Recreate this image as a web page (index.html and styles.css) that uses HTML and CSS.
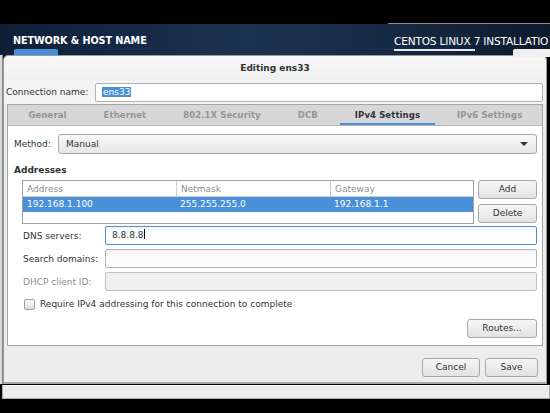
FILE: index.html
```html
<!DOCTYPE html>
<html>
<head>
<meta charset="utf-8">
<link rel="stylesheet" href="styles.css">
</head>
<body>
<div class="screen">
  <div class="topblack"></div>
  <div class="header">
    <div class="hleft">
      <div class="htitle">NETWORK &amp; HOST NAME</div>
      <div class="hbar"></div>
    </div>
    <div class="hright">
      <div class="hsub">CENTOS LINUX 7 INSTALLATIO</div>
      <div class="hline"></div>
    </div>
    <div class="hbox"></div>
  </div>
  <div class="main">
    <div class="lsliver"></div>
    <div class="dialog">
      <div class="dtitle">Editing ens33</div>
      <div class="connrow">
        <span class="lbl">Connection name:</span>
        <div class="input connin"><span class="sel">ens33</span></div>
      </div>
      <div class="notebook">
        <div class="tabs">
          <div class="tab">General</div>
          <div class="tab">Ethernet</div>
          <div class="tab">802.1X Security</div>
          <div class="tab">DCB</div>
          <div class="tab active">IPv4 Settings</div>
          <div class="tab">IPv6 Settings</div>
        </div>
        <div class="page">
          <div class="methodrow">
            <span class="lbl">Method:</span>
            <div class="combo"><span>Manual</span><span class="arrow"></span></div>
          </div>
          <div class="section">Addresses</div>
          <div class="addrrow">
            <div class="table">
              <div class="trow thead">
                <div class="c1">Address</div>
                <div class="c2">Netmask</div>
                <div class="c3">Gateway</div>
              </div>
              <div class="trow tsel">
                <div class="c1">192.168.1.100</div>
                <div class="c2">255.255.255.0</div>
                <div class="c3">192.168.1.1</div>
              </div>
            </div>
            <div class="abtns">
              <div class="btn">Add</div>
              <div class="btn">Delete</div>
            </div>
          </div>
          <div class="frow">
            <span class="flbl">DNS servers:</span>
            <div class="input focus">8.8.8.8<span class="caret"></span></div>
          </div>
          <div class="frow">
            <span class="flbl">Search domains:</span>
            <div class="input"></div>
          </div>
          <div class="frow">
            <span class="flbl dis">DHCP client ID:</span>
            <div class="input disabled"></div>
          </div>
          <div class="checkrow">
            <span class="check"></span>
            <span>Require IPv4 addressing for this connection to complete</span>
          </div>
          <div class="routesrow">
            <div class="btn routes">Routes...</div>
          </div>
        </div>
      </div>
      <div class="footer">
        <div class="btn fbtn cancel">Cancel</div>
        <div class="btn fbtn save">Save</div>
      </div>
    </div>
    <div class="rsliver"></div>
  </div>
  <div class="strip"></div>
</div>
</body>
</html>
```

FILE: styles.css
```css
* { box-sizing: border-box; }
html, body { margin: 0; padding: 0; background: #000; }
body { width: 550px; height: 413px; overflow: hidden; font-family: "DejaVu Sans", sans-serif; font-size: 9px; color: #2e3436; }
.screen { width: 550px; height: 413px; display: flex; flex-direction: column; }
.topblack { height: 23px; background: #000; flex: none; }
.header { height: 32px; flex: none; display: flex; background: linear-gradient(90deg, #0f1f38 0%, #1b3250 45%, #172a44 70%, #0d1a2c 100%); border-top: 1px solid #000; position: relative; }
.hleft { width: 388px; padding-left: 13px; display: flex; flex-direction: column; }
.htitle { font-family: "DejaVu Sans", sans-serif; font-weight: bold; color: #fff; font-size: 9.7px; margin-top: 11px; letter-spacing: -0.1px; }
.hbar { width: 44px; height: 6px; background: #4a8ed8; margin-left: 1px; margin-top: 3px; border-radius: 2px 2px 0 0; }
.hright { flex: 1; border-top: 1px solid #8a8f96; margin-top: -1px; padding-left: 6px; display: flex; flex-direction: column; }
.hsub { color: #fff; font-size: 10.6px; margin-top: 11px; white-space: nowrap; font-family: "DejaVu Sans", sans-serif; letter-spacing: -0.2px; }
.hline { width: 81px; height: 2px; background: #e8e8e8; margin-top: 2px; }
.hbox { position: absolute; left: 513px; top: 25px; width: 37px; height: 8px; background: #f0f0f0; border-radius: 2px 0 0 0; }
.main { height: 329px; flex: none; display: flex; }
.lsliver { width: 3px; background: #d9d9d9; border-right: 1px solid #888; }
.rsliver { width: 3px; background: #000; }
.dialog { flex: 1; background: #ededed; border: 1px solid #9a9a9a; border-bottom: 2px solid #a8a8a8; border-radius: 5px 5px 0 0; display: flex; flex-direction: column; }
.dtitle { height: 24px; line-height: 24px; text-align: center; font-weight: bold; background: linear-gradient(#f7f7f7, #f0f0f0); border-radius: 5px 5px 0 0; color: #2e3436; }
.connrow { height: 24px; display: flex; align-items: center; padding: 0 3px 0 2px; background: #f3f3f3; }
.lbl { width: 89px; flex: none; }
.input { flex: 1; height: 19px; border: 1px solid #b0b0b0; border-radius: 2px; background: linear-gradient(#f0f0f0, #fcfcfc 40%); padding-left: 6px; line-height: 17px; color: #2e3436; }
.connin { background: #fff; }
.sel { background: #4a90d9; color: #fff; padding: 0 1px; }
.notebook { margin: 0 3px 0 3px; border: 1px solid #a5a5a5; display: flex; flex-direction: column; height: 242px; background: #fff; }
.tabs { height: 21px; display: flex; background: #d6d6d6; border-bottom: 1px solid #b8b8b8; padding-left: 2px; overflow: hidden; }
.tab { flex: none; white-space: nowrap; padding: 0 15px; margin: 0 3.5px; line-height: 20px; color: #959595; font-weight: bold; letter-spacing: 0.1px; font-size: 8.5px; }
.tab.active { color: #2e3436; border-bottom: 2px solid #4a90d9; }
.page { flex: 1; padding: 8px 5px 0 6px; display: flex; flex-direction: column; }
.methodrow { display: flex; align-items: center; height: 20px; }
.methodrow .lbl { width: 44px; }
.combo { flex: 1; height: 20px; border: 1px solid #a8a8a8; border-radius: 3px; background: linear-gradient(#f8f8f8, #e6e6e6); display: flex; align-items: center; justify-content: space-between; padding: 0 8px 0 7px; }
.arrow { width: 0; height: 0; border-left: 4px solid transparent; border-right: 4px solid transparent; border-top: 4px solid #2e3436; }
.section { font-weight: bold; margin-top: 11px; height: 12px; }
.addrrow { display: flex; margin-top: 3px; padding-left: 8px; gap: 4px; }
.table { width: 452px; height: 44px; border: 1px solid #a0a0a0; background: #fff; }
.trow { display: flex; height: 15px; line-height: 15px; }
.thead { color: #8e8e8e; border-bottom: 1px solid #ccc; height: 16px; line-height: 16px; }
.thead > div + div { border-left: 1px solid #d0d0d0; }
.c1 { width: 153px; padding-left: 4px; }
.c2 { width: 154px; padding-left: 4px; }
.c3 { flex: 1; padding-left: 4px; }
.tsel { background: #4a90d9; color: #fff; }
.abtns { display: flex; flex-direction: column; gap: 5px; width: 59px; }
.btn { height: 19px; border: 1px solid #a8a8a8; border-radius: 3px; background: linear-gradient(#f6f6f6, #e2e2e2); text-align: center; line-height: 17px; color: #2e3436; }
.frow { display: flex; align-items: center; height: 19px; margin-top: 4px; padding-left: 9px; }
.addrrow + .frow { margin-top: 2px; }
.flbl { width: 82px; flex: none; }
.flbl.dis { color: #8e8e8e; }
.input.focus { border-color: #4a90d9; background: linear-gradient(#f2f5f8, #fff 50%); }
.input.disabled { background: #f0f0f0; border-color: #c0c0c0; }
.caret { display: inline-block; width: 1px; height: 10px; background: #000; vertical-align: -1px; }
.checkrow { display: flex; align-items: center; gap: 5px; margin-top: 7px; padding-left: 10px; height: 12px; }
.check { width: 11px; height: 11px; border: 1px solid #a0a0a0; border-radius: 2px; background: linear-gradient(#fafafa, #e0e0e0); }
.routesrow { display: flex; justify-content: flex-end; margin-top: 9px; }
.routes { width: 70px; }
.footer { flex: 1; display: flex; justify-content: flex-end; align-items: center; gap: 5px; padding: 7px 8px 0 0; }
.cancel { width: 58px; }
.save { width: 53px; }
.strip { height: 14px; flex: none; margin: 1px 0 0 2px; background: #ececec; border: 1px solid #aaa; border-top: 1px solid #fff; }
```
